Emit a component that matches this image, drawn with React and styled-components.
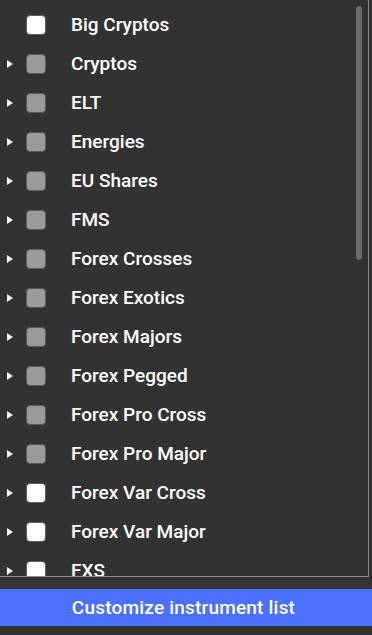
import styled, { createGlobalStyle } from "styled-components"

const GlobalStyle = createGlobalStyle`
    html, body {
        margin: 0;
        padding: 0;
        background: #323232;
        font-family: Roboto, "Liberation Sans", sans-serif;
    }
`
const Panel = styled.div`
    display: flex;
    flex-direction: column;
    width: 372px;
    height: 635px;
    background: #323232;
`
const ListBox = styled.div`
    position: relative;
    width: 369px;
    height: 577px;
    box-sizing: border-box;
    border-right: 1px solid #8a8a8a;
    border-bottom: 1px solid #8a8a8a;
    flex-shrink: 0;
`
const List = styled.div`
    height: 100%;
    overflow-y: auto;
    padding: 5px 0 25px;
    box-sizing: border-box;
    scrollbar-width: none;
    &::-webkit-scrollbar {
        display: none;
    }
`
/* thumb of the list's scrollbar, drawn over the rows */
const Thumb = styled.div`
    position: absolute;
    top: 6px;
    right: 6px;
    width: 6px;
    height: 254px;
    border-radius: 3px;
    background: #6a6a6a;
`
const Row = styled.div`
    display: flex;
    align-items: center;
    height: 39px;
    padding-left: 7px;
`
const Arrow = styled.span`
    width: 0;
    height: 0;
    border-top: 4px solid transparent;
    border-bottom: 4px solid transparent;
    border-left: 6px solid ${p => (p.$hidden ? "transparent" : "#f2f2f2")};
    margin-right: 13px;
`
const Check = styled.span`
    width: 20px;
    height: 20px;
    box-sizing: border-box;
    border: 1.5px solid #5c5c5c;
    border-radius: 4px;
    background: ${p => (p.$partial ? "#9a9a9a" : "#ffffff")};
    margin-right: 25px;
    flex-shrink: 0;
`
const Label = styled.span`
    color: #ffffff;
    font-size: 19px;
    font-weight: 500;
    white-space: nowrap;
`
const Footer = styled.div`
    padding-top: 12px;
`
const CustomizeButton = styled.button`
    display: block;
    width: 100%;
    height: 37px;
    border: none;
    background: #4b6fff;
    color: #ffffff;
    font-family: Roboto, "Liberation Sans", sans-serif;
    font-size: 19px;
    font-weight: 500;
    letter-spacing: 0.2px;
    text-align: center;
    cursor: pointer;
    padding: 0 5px 0 0;
`

const groups = [
    { name: "Big Cryptos", leaf: true },
    { name: "Cryptos", partial: true },
    { name: "ELT", partial: true },
    { name: "Energies", partial: true },
    { name: "EU Shares", partial: true },
    { name: "FMS", partial: true },
    { name: "Forex Crosses", partial: true },
    { name: "Forex Exotics", partial: true },
    { name: "Forex Majors", partial: true },
    { name: "Forex Pegged", partial: true },
    { name: "Forex Pro Cross", partial: true },
    { name: "Forex Pro Major", partial: true },
    { name: "Forex Var Cross" },
    { name: "Forex Var Major" },
    { name: "FXS" },
    { name: "Grains" },
    { name: "Indices" },
    { name: "Indices Cash" },
    { name: "Indices Futures" },
    { name: "Meats" },
    { name: "Metals" },
    { name: "Metals Spot" },
    { name: "Softs" },
    { name: "UK Shares" },
    { name: "US Shares" },
    { name: "US Shares ETF" },
    { name: "US Tech" },
    { name: "Volatility" },
    { name: "Warrants" },
    { name: "World Indices" },
    { name: "ZA Shares" },
    { name: "Zero Spread" },
]

const App = () => {
  return (
    <Panel>
        <GlobalStyle />
        <ListBox>
            <List>
                {groups.map(g => (
                    <Row key={g.name}>
                        <Arrow $hidden={g.leaf} />
                        <Check $partial={g.partial} />
                        <Label>{g.name}</Label>
                    </Row>
                ))}
            </List>
            <Thumb />
        </ListBox>
        <Footer>
            <CustomizeButton>Customize instrument list</CustomizeButton>
        </Footer>
    </Panel>
  )
}

export default App
